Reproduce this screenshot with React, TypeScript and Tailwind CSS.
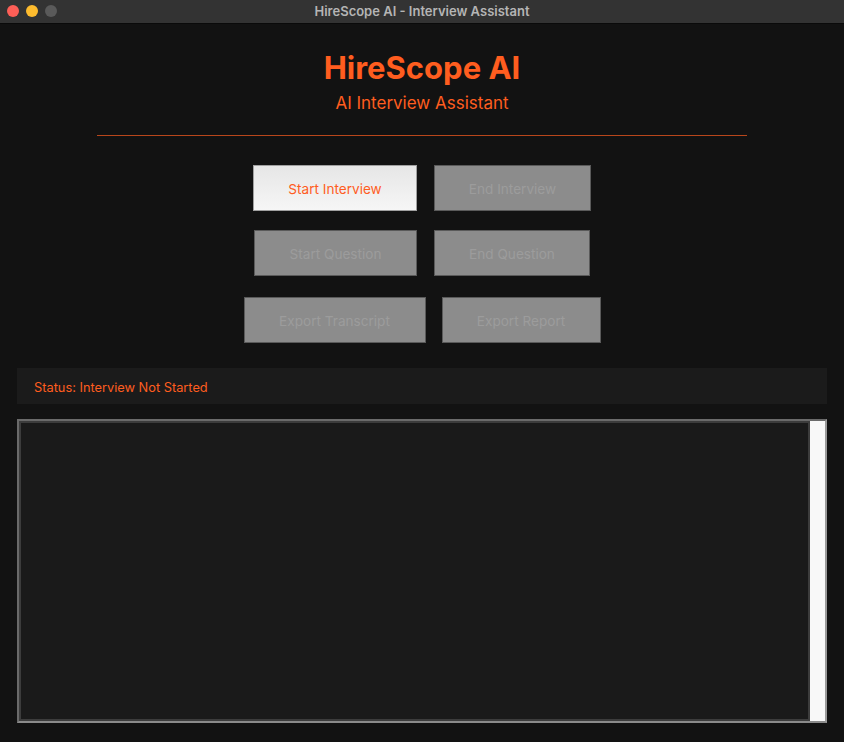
const ORANGE = "text-[#ff5d1f]";

function Btn({ label, active, w }: { label: string; active?: boolean; w: string }) {
  return (
    <button
      className={
        "h-[46px] border pt-[3px] text-[13.6px] " +
        w +
        " " +
        (active
          ? "border-[#a0a0a0] bg-gradient-to-b from-[#e6e6e6] to-[#f6f6f6] " + ORANGE
          : "border-[#5a5a5a] bg-[#8c8c8c] text-[#9c9c9c]")
      }
    >
      {label}
    </button>
  );
}

export default function App() {
  return (
    <div
      className="h-[742px] w-[844px] overflow-hidden bg-[#121212]"
      style={{ fontFamily: "Inter, 'Noto Sans', sans-serif" }}
    >
      {/* window chrome */}
      <div className="relative flex h-[24px] items-center justify-center border-b border-[#0a0a0a] bg-[#333333]">
        <div className="absolute left-[7px] top-[5px] flex gap-[7px]">
          <span className="h-[12px] w-[12px] rounded-full bg-[#fe5f57]" />
          <span className="h-[12px] w-[12px] rounded-full bg-[#febc2e]" />
          <span className="h-[12px] w-[12px] rounded-full bg-[#5a5a5a]" />
        </div>
        <span className="text-[13px] font-semibold text-[#b5b5b5]">HireScope AI - Interview Assistant</span>
      </div>

      <div className="flex flex-col items-center">
        <h1 className={"mt-[26px] text-[31px] font-bold leading-[36px] " + ORANGE}>HireScope AI</h1>
        <p className={"mt-[6px] text-[17px] leading-[22px] " + ORANGE}>AI Interview Assistant</p>
        <div className="mt-[21px] h-px w-[650px] bg-[#ff5d1f] opacity-70" />

        <div className="mt-[29px] flex gap-[17px]">
          <Btn label="Start Interview" active w="w-[164px]" />
          <Btn label="End Interview" w="w-[157px]" />
        </div>
        <div className="mt-[19px] flex gap-[17px]">
          <Btn label="Start Question" w="w-[163px]" />
          <Btn label="End Question" w="w-[156px]" />
        </div>
        <div className="mt-[21px] flex gap-[16px]">
          <Btn label="Export Transcript" w="w-[182px]" />
          <Btn label="Export Report" w="w-[159px]" />
        </div>
      </div>

      <div className="mx-[17px] mt-[25px] flex h-[36px] items-center bg-[#1b1b1b] px-[17px] pt-[4px]">
        <span className={"text-[12.8px] " + ORANGE}>Status: Interview Not Started</span>
      </div>

      <div className="mx-[17px] mt-[15px] flex h-[304px] border-[2px] border-t-[#6a6a6a] border-l-[#6a6a6a] border-b-[#8a8a8a] border-r-[#9a9a9a]">
        <div className="flex-1 border-[2px] border-[#3c3c3c] bg-[#1a1a1a]" />
        <div className="w-[15px] bg-[#f8f8f8]" />
      </div>
    </div>
  );
}
